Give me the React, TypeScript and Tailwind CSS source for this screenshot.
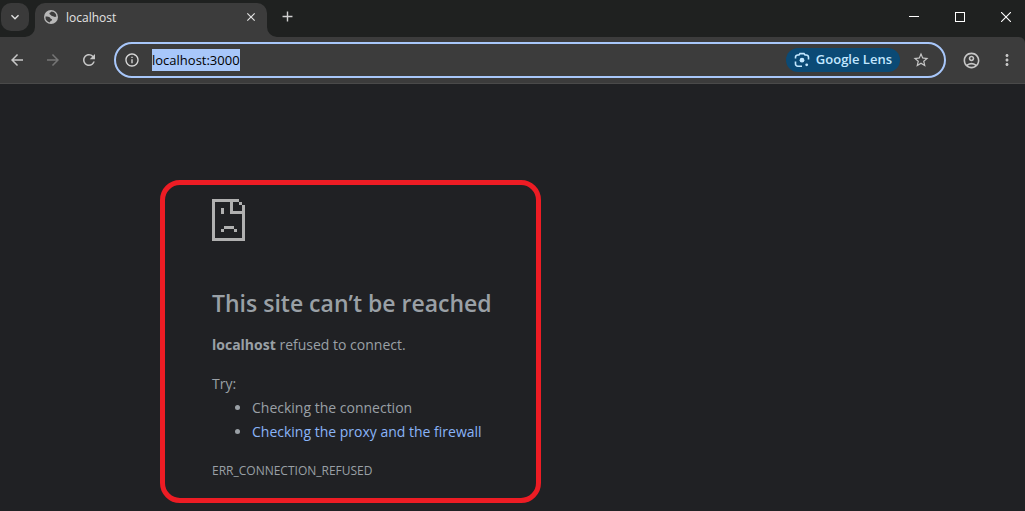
import {
  MdAdd,
  MdArrowBack,
  MdArrowForward,
  MdClose,
  MdInfoOutline,
  MdKeyboardArrowDown,
  MdMoreVert,
  MdOutlineAccountCircle,
  MdRefresh,
  MdStarBorder,
} from "react-icons/md";

function GlobeIcon() {
  return (
    <svg width="14" height="14" viewBox="0 0 14 14" aria-hidden="true">
      <circle cx="7" cy="7" r="7" fill="#b8b8b8" />
      <path
        d="M7.6 1.5C7 2.4 5.6 2.3 5.4 3.5C5.3 4.5 6.6 4.3 7 5.2C7.4 6.1 8.8 5.9 9.6 6.5C10.4 7 11 7.2 12.4 6.6A5.5 5.5 0 0 0 7.6 1.5Z"
        fill="#3c3c3c"
      />
      <path
        d="M1.5 6.6C3 6.4 4.6 6.5 5.6 7.2C6.6 7.9 6.2 8.8 7.4 9.1C8.4 9.4 8.2 10.6 7.2 10.8C6.2 11 6.4 12 5.6 12.4A5.5 5.5 0 0 1 1.5 6.6Z"
        fill="#3c3c3c"
      />
    </svg>
  );
}

function TabStrip() {
  return (
    <div className="flex h-[37px] items-start bg-[#1f2120] pt-[3px] pl-px">
      <button
        aria-label="Search tabs"
        className="flex size-7 items-center justify-center rounded-[10px] bg-[#3a3a3a] text-[#e3e3e3]"
      >
        <MdKeyboardArrowDown size={16} />
      </button>
      <div className="relative ml-1.5 flex h-[34px] w-[232px] items-center rounded-t-[10px] bg-[#3c3c3c] pl-[9px] pb-1.5">
        <svg className="absolute bottom-0 -left-2.5" width="10" height="10" viewBox="0 0 10 10" aria-hidden="true">
          <path d="M10 0A10 10 0 0 1 0 10H10Z" fill="#3c3c3c" />
        </svg>
        <svg className="absolute -right-2.5 bottom-0" width="10" height="10" viewBox="0 0 10 10" aria-hidden="true">
          <path d="M0 0A10 10 0 0 0 10 10H0Z" fill="#3c3c3c" />
        </svg>
        <GlobeIcon />
        <span className="ml-2 flex-1 pt-0.5 text-xs text-[#e3e3e3]">localhost</span>
        <button aria-label="Close tab" className="mr-[9px] text-[#e3e3e3]">
          <MdClose size={14} stroke="currentColor" />
        </button>
      </div>
      <button aria-label="New tab" className="mt-[5px] ml-3 text-[#d0d0d0]">
        <MdAdd size={17} />
      </button>
      <div className="ml-auto flex h-7 items-center text-white">
        <button aria-label="Minimize" className="flex w-[46px] justify-center">
          <svg width="10" height="10" viewBox="0 0 10 10">
            <path d="M0 4.5H10" stroke="currentColor" />
          </svg>
        </button>
        <button aria-label="Maximize" className="flex w-[46px] justify-center">
          <svg width="10" height="10" viewBox="0 0 10 10">
            <rect x="0.5" y="0.5" width="9" height="9" fill="none" stroke="currentColor" />
          </svg>
        </button>
        <button aria-label="Close" className="flex w-[42px] justify-center pl-1">
          <svg width="10" height="10" viewBox="0 0 10 10">
            <path d="M0 0L10 10M10 0L0 10" stroke="currentColor" strokeWidth="1.1" />
          </svg>
        </button>
      </div>
    </div>
  );
}

function LensIcon() {
  return (
    <svg width="16" height="16" viewBox="0 0 16 16" fill="none" stroke="currentColor" strokeWidth="1.6" aria-hidden="true">
      <path d="M1.5 6.5V5.2A2.2 2.2 0 0 1 3.7 3H5L6 1.6H10L11 3H12.3A2.2 2.2 0 0 1 14.5 5.2V7.5" />
      <path d="M1.5 9.5V12A2.2 2.2 0 0 0 3.7 14.2H8" />
      <circle cx="8" cy="8.2" r="2.4" fill="currentColor" stroke="none" />
      <circle cx="12.7" cy="12.8" r="1.4" fill="currentColor" stroke="none" />
    </svg>
  );
}

function Toolbar() {
  return (
    <div className="bg-[#1f2120]">
      <div className="flex h-[47px] items-center rounded-tr-md border-b border-[#4a4a4a] bg-[#3c3c3c] pr-[9px] pl-2 text-[#c7c7c7]">
        <button aria-label="Back">
          <MdArrowBack size={18} />
        </button>
        <button aria-label="Forward" disabled className="ml-[18px] text-[#757575]">
          <MdArrowForward size={18} />
        </button>
        <button aria-label="Reload" className="ml-[18px]">
          <MdRefresh size={18} />
        </button>
        <div className="ml-4 flex h-9 flex-1 items-center rounded-full border-2 border-[#a8c7fa] pr-3.5 pl-2">
          <button aria-label="View site information" className="text-[#dadada]">
            <MdInfoOutline size={16} />
          </button>
          <input
            aria-label="Address"
            defaultValue="localhost:3000"
            spellCheck={false}
            className="ml-3 field-sizing-content h-[22px] bg-[#a8c7fa] text-[13px] text-black outline-none"
          />
          <button className="ml-auto flex h-6 items-center gap-1.5 rounded-full bg-[#0b4a75] px-2 text-[13px] font-semibold text-[#c2e7ff]">
            <LensIcon />
            Google Lens
          </button>
          <button aria-label="Bookmark this page" className="ml-3">
            <MdStarBorder size={18} />
          </button>
        </div>
        <button aria-label="Profile" className="ml-4">
          <MdOutlineAccountCircle size={19} />
        </button>
        <button aria-label="Menu" className="ml-[17px]">
          <MdMoreVert size={18} />
        </button>
      </div>
    </div>
  );
}

function SadPageIcon() {
  return (
    <svg width="33" height="42" viewBox="0 0 33 42" fill="#b0b0b0" shapeRendering="crispEdges" aria-hidden="true">
      <path d="M0 0H27V3H21V12H30V6H33V42H0ZM3 3V39H30V15H18V3Z" fillRule="evenodd" />
      <path d="M27 3H30V6H27ZM9 9H12V15H9ZM12 27H22V30H12ZM9 30H12V33H9ZM22 30H25V33H22Z" />
    </svg>
  );
}

function ErrorPage() {
  return (
    <main className="flex-1 pt-24 pb-2 pl-40 text-[#9aa0a6]">
      <section className="max-w-[381px] rounded-[20px] border-[5px] border-[#ed1c24] pt-3.5 pr-6 pb-[15px] pl-[47px]">
        <SadPageIcon />
        <h1 className="mt-12 text-[23px] leading-7 font-semibold">This site can’t be reached</h1>
        <p className="mt-4 text-sm leading-6">
          <strong className="font-bold">localhost</strong> refused to connect.
        </p>
        <p className="mt-[15px] text-sm leading-6">Try:</p>
        <ul className="list-disc pl-10 text-sm leading-6">
          <li>Checking the connection</li>
          <li>
            <a href="#proxy" className="text-[#8ab4f8]">
              Checking the proxy and the firewall
            </a>
          </li>
        </ul>
        <p className="mt-[15px] text-xs leading-6">ERR_CONNECTION_REFUSED</p>
      </section>
    </main>
  );
}

export default function App() {
  return (
    <div className="flex min-h-screen flex-col bg-[#202124] font-['Open_Sans','Noto_Sans',sans-serif]">
      <TabStrip />
      <Toolbar />
      <ErrorPage />
    </div>
  );
}
